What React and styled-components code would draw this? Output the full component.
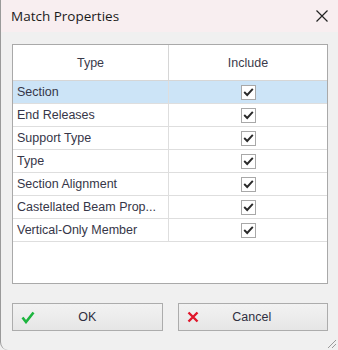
import React from "react";
import styled, { createGlobalStyle } from "styled-components";

const Global = createGlobalStyle`
  html, body { margin: 0; padding: 0; background: #f0f0f0; }
  body { font-family: "Liberation Sans", Arial, sans-serif; }
`;

const Window = styled.div`
  position: relative;
  width: 338px;
  height: 350px;
  box-sizing: border-box;
  background: #f0f0f0;
  border-left: 1px solid #9a9a9a;
  border-bottom-left-radius: 8px;
  display: flex;
  flex-direction: column;
  overflow: hidden;
`;

const TitleBar = styled.div`
  height: 32px;
  background: #f8eef0;
  display: flex;
  align-items: center;
  justify-content: space-between;
  padding: 0 9px 0 10px;
`;

const Title = styled.span`
  font-family: "Open Sans", "Liberation Sans", sans-serif;
  font-size: 13.5px;
  color: #1b1b1b;
  margin-top: -1px;
`;

const Body = styled.div`
  flex: 1;
  display: flex;
  flex-direction: column;
  padding: 12px 10px 0 11px;
`;

const Grid = styled.div`
  height: 240px;
  box-sizing: border-box;
  border: 1px solid #a9a9a9;
  background: #ffffff;
  display: grid;
  grid-template-columns: 156px 1fr;
  grid-template-rows: 36px;
  grid-auto-rows: 23px;
  align-content: start;
`;

const HeadCell = styled.div`
  display: flex;
  align-items: center;
  justify-content: center;
  font-size: 12.5px;
  color: #3a3a4a;
  border-bottom: 1px solid #d6d6d6;
  border-right: ${(p) => (p.$last ? "none" : "1px solid #d6d6d6")};
  box-sizing: border-box;
`;

const Cell = styled.div`
  box-sizing: border-box;
  display: flex;
  align-items: center;
  justify-content: ${(p) => (p.$center ? "center" : "flex-start")};
  padding-left: ${(p) => (p.$center ? "0" : "4px")};
  font-size: 12.5px;
  color: #363648;
  white-space: nowrap;
  overflow: hidden;
  background: ${(p) => (p.$selected ? "#cce4f7" : "#ffffff")};
  border-bottom: 1px solid #dedede;
  border-right: ${(p) => (p.$center ? "none" : "1px solid #dedede")};
`;

const Box = styled.span`
  width: 15px;
  height: 15px;
  box-sizing: border-box;
  border: 1px solid #a8a8a8;
  background: #fff;
  display: flex;
  align-items: center;
  justify-content: center;
  margin-left: 1px;
`;

const Buttons = styled.div`
  margin-top: 19px;
  display: grid;
  grid-template-columns: 1fr 1fr;
  gap: 15px;
`;

const Button = styled.button`
  height: 28px;
  box-sizing: border-box;
  border: 1px solid #acacac;
  background: linear-gradient(#f2f2f2, #e6e6e6);
  display: flex;
  align-items: center;
  padding: 0 8px;
  font-family: "Liberation Sans", Arial, sans-serif;
  font-size: 12.5px;
  color: #2f2f3f;
`;

const Label = styled.span`
  flex: 1;
  text-align: center;
  margin-right: 14px;
`;

const Grip = styled.svg`
  position: absolute;
  right: 1px;
  bottom: 1px;
`;

const Check = () => (
  <svg width="11" height="10" viewBox="0 0 11 10">
    <path d="M1.2 5 L4.2 8 L9.8 1.8" fill="none" stroke="#2a2a2a" strokeWidth="1.9" />
  </svg>
);

const rows = [
  "Section",
  "End Releases",
  "Support Type",
  "Type",
  "Section Alignment",
  "Castellated Beam Prop...",
  "Vertical-Only Member",
];

export default function App() {
  return (
    <>
      <Global />
      <Window>
        <TitleBar>
          <Title>Match Properties</Title>
          <svg width="14" height="14" viewBox="0 0 14 14">
            <path d="M1.5 1.5 L12.5 12.5 M12.5 1.5 L1.5 12.5" stroke="#222" strokeWidth="1.2" />
          </svg>
        </TitleBar>
        <Body>
          <Grid>
            <HeadCell>Type</HeadCell>
            <HeadCell $last>Include</HeadCell>
            {rows.map((r, i) => (
              <React.Fragment key={r}>
                <Cell $selected={i === 0}>{r}</Cell>
                <Cell $center $selected={i === 0}>
                  <Box>
                    <Check />
                  </Box>
                </Cell>
              </React.Fragment>
            ))}
          </Grid>
          <Buttons>
            <Button>
              <svg width="14" height="13" viewBox="0 0 14 13">
                <path d="M1.5 6.5 L5 11 L12.5 1.5" fill="none" stroke="#1db53f" strokeWidth="2.6" />
              </svg>
              <Label>OK</Label>
            </Button>
            <Button>
              <svg width="12" height="12" viewBox="0 0 12 12">
                <path d="M1.5 1.5 L10.5 10.5 M10.5 1.5 L1.5 10.5" stroke="#e0162b" strokeWidth="2.4" />
              </svg>
              <Label>Cancel</Label>
            </Button>
          </Buttons>
        </Body>
        <Grip width="12" height="12" viewBox="0 0 12 12">
          <path d="M11 3 L3 11 M11 7 L7 11 M11 11 L11 11" stroke="#9a9a9a" strokeWidth="1" />
        </Grip>
      </Window>
    </>
  );
}
